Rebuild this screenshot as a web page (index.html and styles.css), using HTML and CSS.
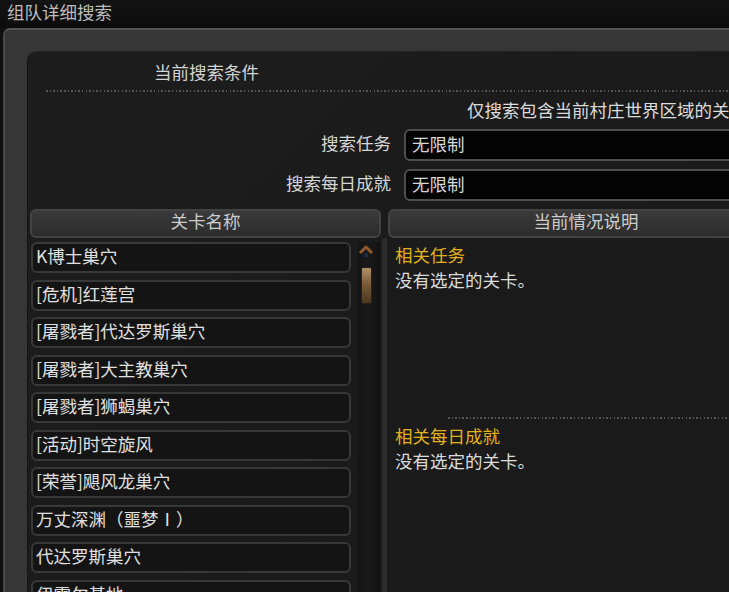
FILE: index.html
```html
<!DOCTYPE html>
<html lang="zh-CN">
<head>
<meta charset="utf-8">
<title>组队详细搜索</title>
<link rel="stylesheet" href="styles.css">
</head>
<body>
<div class="titlebar">组队详细搜索</div>
<div class="frame">
  <div class="panel">
    <div class="cond-title">当前搜索条件</div>
    <div class="dots dots-top"></div>
    <div class="only">仅搜索包含当前村庄世界区域的关卡</div>
    <div class="field"><span class="label">搜索任务</span><div class="select">无限制</div></div>
    <div class="field"><span class="label">搜索每日成就</span><div class="select">无限制</div></div>
    <div class="table">
      <div class="th">关卡名称</div>
      <div class="th">当前情况说明</div>
      <div class="left-body">
        <ul class="list">
          <li class="item">K博士巢穴</li>
          <li class="item">[危机]红莲宫</li>
          <li class="item">[屠戮者]代达罗斯巢穴</li>
          <li class="item">[屠戮者]大主教巢穴</li>
          <li class="item">[屠戮者]狮蝎巢穴</li>
          <li class="item">[活动]时空旋风</li>
          <li class="item">[荣誉]飓风龙巢穴</li>
          <li class="item">万丈深渊（噩梦Ⅰ）</li>
          <li class="item">代达罗斯巢穴</li>
          <li class="item">伊雷尔基地</li>
        </ul>
        <div class="scrollbar">
          <svg class="up" width="16" height="16" viewBox="0 0 16 16">
            <path d="M2 9 L8 3 L14 9" fill="none" stroke="#8f5a2c" stroke-width="3" stroke-linejoin="round"/>
            <rect x="6" y="9" width="4" height="4" rx="1" fill="#1d2c44"/>
          </svg>
          <div class="thumb"></div>
        </div>
      </div>
      <div class="right-body">
        <div class="sec-title">相关任务</div>
        <div class="sec-text">没有选定的关卡。</div>
        <div class="dots dots-mid"></div>
        <div class="sec-title">相关每日成就</div>
        <div class="sec-text">没有选定的关卡。</div>
      </div>
    </div>
  </div>
</div>
</body>
</html>
```
FILE: styles.css
```css
html, body {
  margin: 0;
  padding: 0;
  width: 729px;
  height: 592px;
  overflow: hidden;
  background: #101010;
  font-family: "Noto Sans CJK SC", "Noto Sans", sans-serif;
  font-size: 17.5px;
  color: #dadada;
}

.titlebar {
  height: 28px;
  line-height: 24px;
  padding-left: 7px;
  box-sizing: border-box;
  color: #bdbdbd;
  background: linear-gradient(#141414, #0c0c0c);
  white-space: nowrap;
}

.frame {
  margin-left: 3px;
  width: 820px;
  height: 620px;
  background: #363636;
  border-top: 2px solid #555555;
  border-left: 2px solid #474747;
  border-top-left-radius: 7px;
  padding: 21px 0 0 22px;
  box-sizing: border-box;
}

.panel {
  width: 790px;
  height: 600px;
  background: linear-gradient(135deg, #1d1d1d, #1a1a1a 60%, #1c1c1c);
  border-top: 1px solid #222;
  border-left: 1px solid #141414;
  border-top-left-radius: 10px;
  box-sizing: border-box;
  white-space: nowrap;
}

.cond-title {
  height: 38px;
  line-height: 40px;
  padding-left: 126px;
  color: #d4d4d4;
}

.dots {
  height: 2px;
  background-image: repeating-linear-gradient(to right, #565656 0 1.5px, transparent 1.5px 3.6px);
}

.dots-top {
  margin-left: 18px;
}

.only {
  height: 37px;
  line-height: 36px;
  padding-left: 439px;
  color: #dcdcdc;
}

.field {
  display: grid;
  grid-template-columns: 363px 400px;
  column-gap: 13px;
  align-items: center;
  margin-bottom: 8px;
}

.label {
  text-align: right;
  color: #d6d6d6;
  line-height: 24px;
  padding-bottom: 4px;
}

.select {
  height: 32px;
  line-height: 26px;
  box-sizing: border-box;
  border: 2px solid #4e4e4e;
  border-radius: 6px;
  background: #040404;
  padding-left: 6px;
  color: #d8d8d8;
}

.table {
  display: grid;
  grid-template-columns: 351px 396px;
  grid-template-rows: 29px 400px;
  column-gap: 7px;
  margin-left: 2px;
}

.th {
  box-sizing: border-box;
  border: 2px solid #434343;
  border-radius: 6px;
  background: linear-gradient(#3a3a3a, #2c2c2c);
  text-align: center;
  line-height: 20px;
  color: #cdcdcd;
}

.left-body {
  display: flex;
  padding-top: 4px;
}

.list {
  list-style: none;
  margin: 0 0 0 1px;
  padding: 0;
  width: 320px;
}

.item {
  height: 31px;
  margin-bottom: 6.5px;
  box-sizing: border-box;
  border: 2px solid #383838;
  border-radius: 6px;
  background: #141414;
  padding-left: 3px;
  line-height: 24px;
  color: #e0e0e0;
}

.scrollbar {
  margin-left: 7px;
  width: 22px;
  background: linear-gradient(to right, #141414, #1a1a1a 50%, #121212);
  display: flex;
  flex-direction: column;
}

.up {
  margin: 2px 0 0 0;
  display: block;
}

.thumb {
  margin: 7px 0 0 3px;
  width: 11px;
  height: 37px;
  box-sizing: border-box;
  border: 1px solid #2a2014;
  border-radius: 2px;
  background: linear-gradient(#b2916a, #7a5c38 45%, #4a3820);
}

.right-body {
  margin-left: -6px;
  border-left: 5px solid #2c2c2c;
  padding: 3.5px 0 0 8px;
  line-height: 25px;
}

.sec-title {
  color: #e2b21e;
}

.sec-text {
  color: #dcdcdc;
}

.dots-mid {
  margin: 125.5px 0 3.5px 53px;
}
```
